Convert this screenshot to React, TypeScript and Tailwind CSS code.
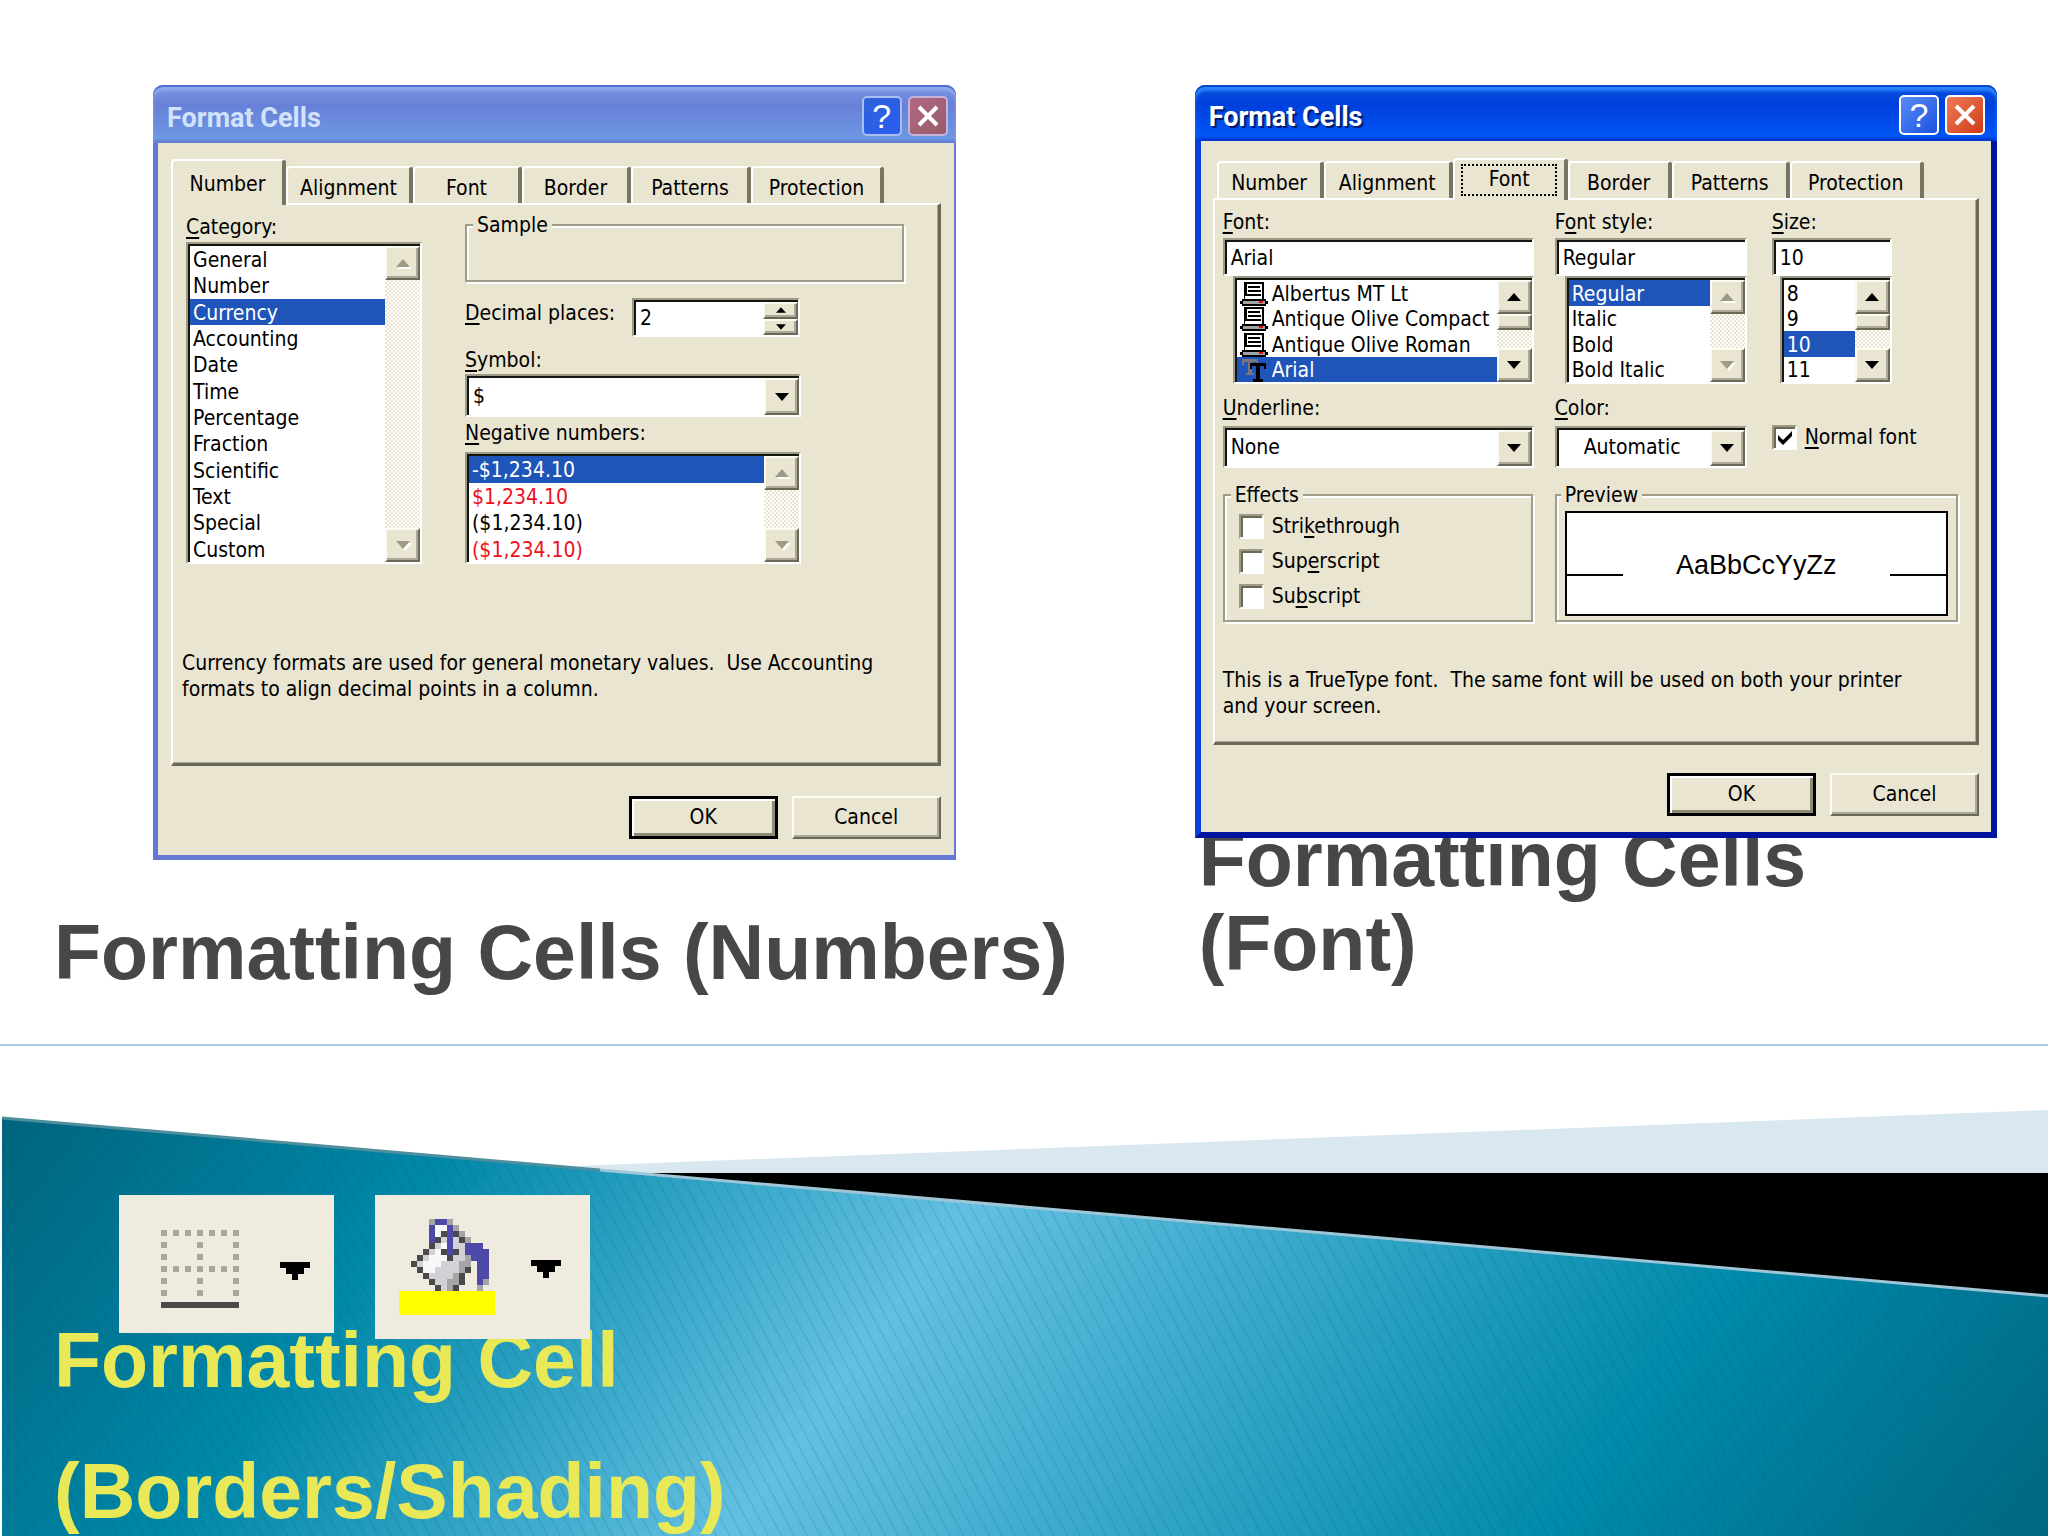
import { useState, type ReactNode } from 'react'
import clsx from 'clsx'

const TABS = ['Number', 'Alignment', 'Font', 'Border', 'Patterns', 'Protection']

const CATEGORIES = [
  'General',
  'Number',
  'Currency',
  'Accounting',
  'Date',
  'Time',
  'Percentage',
  'Fraction',
  'Scientific',
  'Text',
  'Special',
  'Custom',
]

const NEGATIVES = [
  { text: '-$1,234.10', red: false },
  { text: '$1,234.10', red: true },
  { text: '($1,234.10)', red: false },
  { text: '($1,234.10)', red: true },
]

const FONTS = ['Albertus MT Lt', 'Antique Olive Compact', 'Antique Olive Roman', 'Arial']

const sunken =
  'border-2 border-t-[#9d9a87] border-l-[#9d9a87] border-r-white border-b-white bg-white shadow-[inset_2px_2px_0_#15150f] pt-0.5 pl-0.5'
const raised =
  'border-2 border-t-[#fbfaf3] border-l-[#fbfaf3] border-r-[#6b6955] border-b-[#6b6955] bg-[#e9e5d1] shadow-[inset_-2px_-2px_0_#aca899]'
const fieldset =
  'border-2 border-[#9f9c89] shadow-[inset_2px_2px_0_#fff,2px_2px_0_#fff]'
const track =
  'bg-[repeating-conic-gradient(#fff_0_25%,#e9e5d1_0_50%)] bg-[length:4px_4px]'

/** Puts the access key underline on the first match of `k`. */
function Key({ text, k }: { text: string; k: string }) {
  const i = text.indexOf(k)
  return (
    <>
      {text.slice(0, i)}
      <span className="underline decoration-2 underline-offset-3 [text-decoration-skip-ink:none]">
        {k}
      </span>
      {text.slice(i + 1)}
    </>
  )
}

function Arrow({ up, dim, small }: { up?: boolean; dim?: boolean; small?: boolean }) {
  return (
    <svg
      viewBox="0 0 14 8"
      className={clsx(small ? 'h-1.5 w-2.5' : 'h-2 w-3.5', 'overflow-visible')}
      aria-hidden="true"
    >
      {dim && <path d={up ? 'M2 10h14L9 2z' : 'M2 2h14L9 10z'} fill="#fff" />}
      <path d={up ? 'M0 8h14L7 0z' : 'M0 0h14L7 8z'} fill={dim ? '#9d9a87' : '#000'} />
    </svg>
  )
}

function ScrollBar({ dim, thumb }: { dim?: boolean; thumb?: boolean }) {
  return (
    <div className={clsx('flex w-[35px] shrink-0 flex-col', track)}>
      <button
        type="button"
        aria-label="Scroll up"
        className={clsx('flex h-[34px] items-center justify-center', raised)}
      >
        <Arrow up dim={dim} />
      </button>
      {thumb && <div className={clsx('h-4', raised)} />}
      <div className="flex-1" />
      <button
        type="button"
        aria-label="Scroll down"
        className={clsx('flex h-[34px] items-center justify-center', raised)}
      >
        <Arrow dim={dim} />
      </button>
    </div>
  )
}

function ListBox({
  label,
  className,
  children,
  dim,
  thumb,
}: {
  label: string
  className: string
  children: ReactNode
  dim?: boolean
  thumb?: boolean
}) {
  return (
    <div className={clsx('flex', sunken, className)}>
      <ul role="listbox" aria-label={label} className="flex min-w-0 flex-1 flex-col">
        {children}
      </ul>
      <ScrollBar dim={dim} thumb={thumb} />
    </div>
  )
}

function Option({
  selected,
  red,
  children,
}: {
  selected?: boolean
  red?: boolean
  children: ReactNode
}) {
  return (
    <li
      role="option"
      aria-selected={!!selected}
      className={clsx(
        'flex min-h-0 flex-1 items-center gap-1 pt-0.5 pl-[3px] leading-6 whitespace-nowrap',
        selected && 'bg-[#1f55b8] text-white',
        red && 'text-[#f0101c]',
      )}
    >
      {children}
    </li>
  )
}

function DropDown({
  id,
  value,
  className,
  center,
}: {
  id: string
  value: string
  className: string
  center?: boolean
}) {
  return (
    <div className={clsx('relative flex', sunken, className)}>
      <select
        id={id}
        className={clsx(
          'min-w-0 flex-1 appearance-none bg-transparent outline-none',
          center ? 'pl-[25px]' : 'pl-1',
        )}
      >
        <option>{value}</option>
      </select>
      <div
        className={clsx(
          'pointer-events-none flex w-[35px] items-center justify-center',
          raised,
        )}
      >
        <Arrow />
      </div>
    </div>
  )
}

function CheckBox({
  id,
  text,
  k,
  checked,
}: {
  id: string
  text: string
  k: string
  checked?: boolean
}) {
  const [on, setOn] = useState(!!checked)
  return (
    <div className="flex items-center gap-2">
      <span className="relative flex size-[25px]">
        <input
          id={id}
          type="checkbox"
          checked={on}
          onChange={(e) => setOn(e.target.checked)}
          className="size-[25px] appearance-none border-2 border-t-[#9d9a87] border-r-white border-b-white border-l-[#9d9a87] bg-white shadow-[inset_2px_2px_0_#6b6955]"
        />
        {on && (
          <svg
            viewBox="0 0 14 14"
            className="pointer-events-none absolute top-1.5 left-1.5 size-3.5"
            aria-hidden="true"
          >
            <path d="M0 4v5l5 5 9-9V0L5 9z" />
          </svg>
        )}
      </span>
      <label htmlFor={id} className="leading-[26px]">
        <Key text={text} k={k} />
      </label>
    </div>
  )
}

function PrinterIcon() {
  return (
    <svg viewBox="0 0 28 24" className="h-6 w-7 shrink-0" shapeRendering="crispEdges" aria-hidden="true">
      <path d="M4 0h20v18H4z" fill="#000" />
      <path d="M7 2h15v15H5v-3h2z" fill="#fff" />
      <path d="M8 5h12M8 9h13M7 13h14" stroke="#000" strokeWidth="2" />
      <path d="M2 17h24v2h2v3h-2v2H2v-2H0v-3h2z" fill="#000" />
      <path d="M3 19h22v3H3z" fill="#a2a2a2" />
      <path d="M19 19h4v2h-4z" fill="#e01010" />
    </svg>
  )
}

function TrueTypeIcon() {
  return (
    <svg viewBox="0 0 28 24" className="h-6 w-7 shrink-0" aria-hidden="true">
      <path
        d="M2 1h16v6h-2V4h-4v11h2v2H6v-2h2V4H4v3H2z"
        fill="#77757f"
      />
      <path d="M10 5h16v6h-2V8h-4v13h3v3h-10v-3h3V8h-4v3h-2z" fill="#000" />
    </svg>
  )
}

function Dialog({
  active,
  tab,
  tabWidths,
  children,
}: {
  active: boolean
  tab: string
  tabWidths: string[]
  children: ReactNode
}) {
  return (
    <section
      aria-label={`Format Cells, ${tab}`}
      className="relative z-10 font-['DejaVu_Sans_Condensed','DejaVu_Sans',sans-serif] text-[21px] text-black"
    >
      <header
        className={clsx(
          'flex items-center gap-1.5 rounded-t-[10px] pt-1 pl-3.5',
          active
            ? 'h-14 bg-linear-to-b from-[#0a4fd8] via-[#0040dd] via-35% to-[#0058f8] pr-3 text-white shadow-[inset_0_2px_0_#0a4ac8,inset_0_6px_3px_#2b84ff,inset_0_-3px_2px_#0038d0]'
            : 'h-[58px] bg-linear-to-b from-[#7b95e0] via-[#6781d8] via-35% to-[#6f9ae4] pr-2 text-[#d3e2fb] shadow-[inset_0_2px_0_#4f6dcc,inset_0_6px_3px_#8fa9ea,inset_0_-3px_2px_#6280d4]',
        )}
      >
        <h2
          className={clsx(
            "flex-1 pt-1 font-['Roboto',sans-serif] text-[27px] font-bold",
            active && 'text-shadow-[2px_2px_1px_#001a70]',
          )}
        >
          Format Cells
        </h2>
        <button
          type="button"
          aria-label="Help"
          className={clsx(
            "flex size-10 items-center justify-center rounded-[5px] border-2 font-['Liberation_Sans',sans-serif] text-[34px] leading-none text-white",
            active
              ? 'border-white bg-linear-to-br from-[#5a8cf4] to-[#1c4fe0]'
              : 'border-[#a9bff2] bg-linear-to-br from-[#2f62d8] to-[#2a5cf0]',
          )}
        >
          ?
        </button>
        <button
          type="button"
          aria-label="Close"
          className={clsx(
            'flex size-10 items-center justify-center rounded-[5px] border-2',
            active
              ? 'border-white bg-linear-to-br from-[#ee7a58] to-[#d03a10]'
              : 'border-[#c3b3dd] bg-linear-to-br from-[#b06a80] to-[#9a5a6c]',
          )}
        >
          <svg viewBox="0 0 22 22" className="size-[22px]" aria-hidden="true">
            <path d="M2 2l18 18M20 2L2 20" stroke="#fff" strokeWidth="4" />
          </svg>
        </button>
      </header>

      <div
        className={clsx(
          'bg-[#e9e5d1] pb-4',
          active
            ? 'border-x-[6px] border-b-[6px] border-l-[#0a3fdc] border-r-[#0018a0] border-b-[#0012a0] px-3 pt-[17px]'
            : 'border-r-2 border-b-[5px] border-l-[5px] border-[#6478d4] px-[13px] pt-4',
        )}
      >
        <div
          role="tablist"
          className={clsx('flex items-end', active ? 'h-10 pl-1' : 'h-11')}
        >
          {TABS.map((name, i) => (
            <button
              key={name}
              type="button"
              role="tab"
              aria-selected={name === tab}
              className={clsx(
                'flex items-center justify-center rounded-t-[4px] border-t-2 border-r-4 border-l-2 border-t-white border-r-[#77745f] border-l-white bg-[#e9e5d1]',
                tabWidths[i],
                name === tab
                  ? 'relative -mb-0.5 grow-0 self-stretch pt-1'
                  : 'h-[37px] pt-1.5',
              )}
            >
              {name === tab && active ? (
                <span className="-mt-1 flex h-8 w-24 items-center justify-center border-2 border-dotted border-black">
                  {name}
                </span>
              ) : (
                name
              )}
            </button>
          ))}
        </div>
        <div
          role="tabpanel"
          className="border-t-2 border-r-3 border-b-3 border-l-2 border-t-white border-r-[#6b6955] border-b-[#6b6955] border-l-white shadow-[inset_-1px_-1px_0_#aca899]"
        >
          {children}
        </div>
        <div className={clsx('flex justify-end gap-3.5', active ? 'mt-7' : 'mt-[30px]')}>
          <button
            type="button"
            className="h-[43px] w-[149px] border-[3px] border-black bg-[#e9e5d1] shadow-[inset_2px_2px_0_#fff,inset_-3px_-3px_0_#8d8a75]"
          >
            OK
          </button>
          <button type="button" className={clsx('h-[43px] w-[149px]', raised)}>
            Cancel
          </button>
        </div>
      </div>
    </section>
  )
}

function NumberDialog() {
  return (
    <Dialog
      active={false}
      tab="Number"
      tabWidths={['w-[115px]', 'w-[127px]', 'w-[109px]', 'w-[109px]', 'w-[120px]', 'w-[133px]']}
    >
      <div className="px-2 pt-[7px] pb-[61px]">
        <div className="flex gap-[43px] pr-[26px] pl-[5px]">
          <div className="w-[236px] shrink-0">
            <div className="leading-[30px]">
              <Key text="Category:" k="C" />
            </div>
            <ListBox label="Category" className="h-[322px]" dim>
              {CATEGORIES.map((c) => (
                <Option key={c} selected={c === 'Currency'}>
                  {c}
                </Option>
              ))}
            </ListBox>
          </div>
          <div className="min-w-0 flex-1">
            <fieldset className={clsx('h-[70px]', fieldset)}>
              <legend className="ml-1.5 bg-[#e9e5d1] px-1 leading-[26px]">Sample</legend>
            </fieldset>
            <div className="mt-4 flex">
              <label htmlFor="places" className="w-[167px] leading-[30px]">
                <Key text="Decimal places:" k="D" />
              </label>
              <div className={clsx('flex h-[39px] w-[168px]', sunken)}>
                <input
                  id="places"
                  defaultValue="2"
                  className="min-w-0 flex-1 bg-transparent pl-1 outline-none"
                />
                <div className="flex w-[35px] flex-col">
                  <button
                    type="button"
                    aria-label="More"
                    className={clsx('flex flex-1 items-center justify-center', raised)}
                  >
                    <Arrow up small />
                  </button>
                  <button
                    type="button"
                    aria-label="Fewer"
                    className={clsx('flex flex-1 items-center justify-center', raised)}
                  >
                    <Arrow small />
                  </button>
                </div>
              </div>
            </div>
            <label htmlFor="symbol" className="mt-2.5 block leading-[26px]">
              <Key text="Symbol:" k="S" />
            </label>
            <DropDown id="symbol" value="$" className="mt-px h-[43px] w-[336px]" />
            <div className="mt-[3px] leading-[26px]">
              <Key text="Negative numbers:" k="N" />
            </div>
            <ListBox label="Negative numbers" className="mt-1.5 h-28 w-[336px]" dim>
              {NEGATIVES.map((n, i) => (
                <Option key={i} selected={i === 0} red={n.red}>
                  {n.text}
                </Option>
              ))}
            </ListBox>
          </div>
        </div>
        <p className="mt-[86px] pl-px leading-[26px]">
          Currency formats are used for general monetary values.&nbsp; Use Accounting
          <br />
          formats to align decimal points in a column.
        </p>
      </div>
    </Dialog>
  )
}

function FontDialog() {
  return (
    <Dialog
      active
      tab="Font"
      tabWidths={['w-[107px]', 'w-[129px]', 'w-[115px]', 'w-[104px]', 'w-[118px]', 'w-[134px]']}
    >
      <div className="pt-[9px] pr-[18px] pb-[23px] pl-2">
        <div className="grid grid-cols-[311px_192px_1fr] gap-x-[21px]">
          <div>
            <label htmlFor="font" className="block leading-[26px]">
              <Key text="Font:" k="F" />
            </label>
            <input
              id="font"
              defaultValue="Arial"
              className={clsx('mt-[3px] h-[38px] w-full outline-none', sunken, 'pl-1.5')}
            />
            <ListBox label="Font" className="ml-2.5 h-[108px]" thumb>
              {FONTS.map((f) => (
                <Option key={f} selected={f === 'Arial'}>
                  {f === 'Arial' ? <TrueTypeIcon /> : <PrinterIcon />}
                  {f}
                </Option>
              ))}
            </ListBox>
          </div>
          <div>
            <label htmlFor="style" className="block leading-[26px]">
              <Key text="Font style:" k="o" />
            </label>
            <input
              id="style"
              defaultValue="Regular"
              className={clsx('mt-[3px] h-[38px] w-full outline-none', sunken, 'pl-1.5')}
            />
            <ListBox label="Font style" className="ml-2.5 h-[108px]" dim>
              {['Regular', 'Italic', 'Bold', 'Bold Italic'].map((s) => (
                <Option key={s} selected={s === 'Regular'}>
                  {s}
                </Option>
              ))}
            </ListBox>
          </div>
          <div className="pl-1">
            <label htmlFor="size" className="block leading-[26px]">
              <Key text="Size:" k="S" />
            </label>
            <input
              id="size"
              defaultValue="10"
              className={clsx('mt-[3px] h-[38px] w-[120px] outline-none', sunken, 'pl-1.5')}
            />
            <ListBox label="Size" className="ml-2 h-[108px] w-28" thumb>
              {['8', '9', '10', '11'].map((s) => (
                <Option key={s} selected={s === '10'}>
                  {s}
                </Option>
              ))}
            </ListBox>
          </div>
          <div className="mt-[11px]">
            <label htmlFor="underline" className="block leading-[26px]">
              <Key text="Underline:" k="U" />
            </label>
            <DropDown id="underline" value="None" className="mt-[5px] h-[42px]" />
          </div>
          <div className="mt-[11px]">
            <label htmlFor="color" className="block leading-[26px]">
              <Key text="Color:" k="C" />
            </label>
            <DropDown id="color" value="Automatic" className="mt-[5px] h-[42px]" center />
          </div>
          <div className="mt-10 pl-1">
            <CheckBox id="normal" text="Normal font" k="N" checked />
          </div>
        </div>

        <div className="mt-3.5 grid grid-cols-[310px_1fr] gap-[22px]">
          <fieldset className={clsx('h-[140px] pl-3.5', fieldset)}>
            <legend className="-ml-2 bg-[#e9e5d1] px-1 leading-[26px]">Effects</legend>
            <div className="flex flex-col gap-[9px] pt-[5px]">
              <CheckBox id="strike" text="Strikethrough" k="k" />
              <CheckBox id="super" text="Superscript" k="e" />
              <CheckBox id="sub" text="Subscript" k="b" />
            </div>
          </fieldset>
          <fieldset className={clsx('h-[140px] px-2', fieldset)}>
            <legend className="-ml-1 bg-[#e9e5d1] px-1 leading-[26px]">Preview</legend>
            <div className="mt-[3px] flex h-[105px] items-center border-2 border-black bg-white">
              <span className="mt-[22px] h-0.5 w-14 bg-black" />
              <span className="flex-1 pt-1 text-center font-['Liberation_Sans',sans-serif] text-[27px]">
                AaBbCcYyZz
              </span>
              <span className="mt-[22px] h-0.5 w-14 bg-black" />
            </div>
          </fieldset>
        </div>

        <p className="mt-[45px] leading-[26px]">
          This is a TrueType font.&nbsp; The same font will be used on both your printer
          <br />
          and your screen.
        </p>
      </div>
    </Dialog>
  )
}

function BordersIcon() {
  const dots: [number, number][] = []
  for (let y = 0; y < 6; y++) {
    for (let x = 0; x < 7; x++) {
      if (y % 3 === 0 || x % 3 === 0) dots.push([x * 2, y * 2])
    }
  }
  return (
    <svg viewBox="0 0 13 13" className="size-[78px]" shapeRendering="crispEdges" aria-hidden="true">
      {dots.map(([x, y]) => (
        <rect key={`${x}-${y}`} x={x} y={y} width="1" height="1" fill="#a9a69b" />
      ))}
      <rect y="12" width="13" height="1" fill="#4c4a47" />
    </svg>
  )
}

// One letter per pixel, see BUCKET_COLORS.
const BUCKET = [
  '...gbbg......',
  '...bwwbg.....',
  '...bwdbdg....',
  '...bdlbldg...',
  '...dlwbllbbb.',
  '..dlwdbdlbbbb',
  '.dlwwwdllgbbb',
  'dlwwwlllgg.bb',
  '.dwwllllgd.bb',
  '..dllllgd..bb',
  '...dllggd..bg',
  '....dlgd...g.',
]
const BUCKET_COLORS: Record<string, string> = {
  g: '#a5a5a5',
  b: '#4c49a8',
  w: '#f8f8fa',
  l: '#d2d2d6',
  d: '#4a4a4a',
}

function BucketIcon() {
  return (
    <svg viewBox="0 0 16 16" className="size-24" shapeRendering="crispEdges" aria-hidden="true">
      {BUCKET.flatMap((row, y) =>
        [...row].map(
          (c, x) =>
            c !== '.' && (
              <rect
                key={`${x}-${y}`}
                x={x + 2}
                y={y}
                width="1"
                height="1"
                fill={BUCKET_COLORS[c]}
              />
            ),
        ),
      )}
      <rect y="12" width="16" height="4" fill="#ff0" />
    </svg>
  )
}

function SplitArrow() {
  return (
    <svg viewBox="0 0 5 3" className="mt-1 h-[18px] w-[30px]" shapeRendering="crispEdges" aria-hidden="true">
      <path d="M0 0h5v1H4v1H3v1H2V2H1V1H0z" />
    </svg>
  )
}

function Swoosh() {
  return (
    <svg
      viewBox="0 0 2048 490"
      preserveAspectRatio="none"
      className="absolute inset-0 size-full"
      aria-hidden="true"
    >
      <defs>
        <linearGradient id="teal" gradientUnits="userSpaceOnUse" x1="0" y1="72" x2="1541" y2="1185">
          <stop offset="0" stopColor="#00647e" />
          <stop offset="0.2" stopColor="#0088a9" />
          <stop offset="0.44" stopColor="#64c0e2" />
          <stop offset="0.79" stopColor="#008aab" />
          <stop offset="1" stopColor="#006782" />
        </linearGradient>
        <pattern
          id="stripes"
          width="13"
          height="13"
          patternUnits="userSpaceOnUse"
          patternTransform="skewX(28)"
        >
          <rect width="2" height="13" fill="#00506c" opacity="0.12" />
        </pattern>
      </defs>
      <path d="M575 120L2048 64v63H630z" fill="#d9e8f0" />
      <path d="M620 127H2048v124z" fill="#000" />
      <path d="M2 72L2048 250v240H2z" fill="url(#teal)" />
      <path d="M2 72L2048 250v240H2z" fill="url(#stripes)" />
      <path d="M600 124L2048 250" stroke="#9fc6d6" strokeWidth="3" />
      <path d="M2 72L600 124" stroke="#4f8e9c" strokeWidth="3" />
    </svg>
  )
}

export default function App() {
  return (
    <main className="bg-white font-['Liberation_Sans',Arial,sans-serif]">
      <div className="grid grid-cols-[7fr_5fr] pt-[85px] pb-[50px]">
        <div>
          <div className="pr-[239px] pl-[153px]">
            <NumberDialog />
          </div>
          <h1 className="mt-[50px] pl-[54px] text-[77px] leading-[84px] font-bold whitespace-nowrap text-[#484647]">
            Formatting Cells (Numbers)
          </h1>
        </div>
        <div className="pr-[51px]">
          <FontDialog />
          <h1 className="-mt-[21px] pl-1 text-[77px] leading-[84px] font-bold text-[#484647]">
            Formatting Cells
            <br />
            (Font)
          </h1>
        </div>
      </div>
      <hr className="h-0.5 border-0 bg-[#a9cde0]" />

      <div className="relative h-[490px] overflow-hidden">
        <Swoosh />
        <div className="relative z-10 flex items-start gap-[41px] pt-[149px] pl-[119px]">
          <button
            type="button"
            aria-label="Borders"
            className="flex h-[138px] w-[215px] items-center gap-[41px] bg-[#efecdf] pt-2.5 pl-[42px]"
          >
            <BordersIcon />
            <SplitArrow />
          </button>
          <button
            type="button"
            aria-label="Fill color"
            className="flex h-36 w-[215px] items-center gap-9 bg-[#efecdf] pl-6"
          >
            <BucketIcon />
            <SplitArrow />
          </button>
        </div>
        <h1 className="relative -mt-11 pl-[54px] text-[77px] leading-[131px] font-bold text-[#e9e957]">
          Formatting Cell
          <br />
          (Borders/Shading)
        </h1>
      </div>
    </main>
  )
}
